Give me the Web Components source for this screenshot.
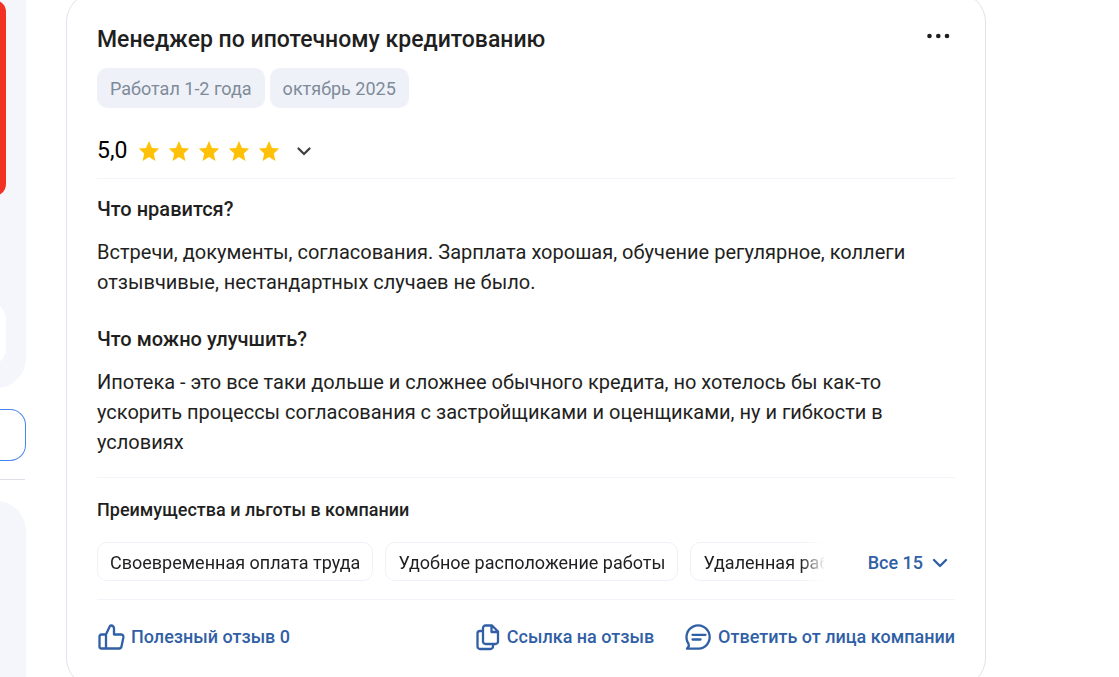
<!DOCTYPE html>
<html lang="ru">
<head>
<meta charset="utf-8">
<meta name="viewport" content="width=device-width, initial-scale=1">
<title>Отзыв о компании</title>
<style>
body { margin: 0; background: #fff; color: #1f1f22; font-family: Roboto, "Liberation Sans", sans-serif; height: 100vh; overflow: hidden; }
</style>
</head>
<body>
<review-page>
  <side-rail slot="side"></side-rail>
  <review-card>
    <span slot="title">Менеджер по ипотечному кредитованию</span>
    <tag-chip slot="meta">Работал 1-2 года</tag-chip>
    <tag-chip slot="meta">октябрь 2025</tag-chip>
    <star-rating slot="rating" value="5"></star-rating>
    <review-section>
      <span slot="heading">Что нравится?</span>
      Встречи, документы, согласования. Зарплата хорошая, обучение регулярное, коллеги отзывчивые, нестандартных случаев не было.
    </review-section>
    <review-section>
      <span slot="heading">Что можно улучшить?</span>
      Ипотека - это все таки дольше и сложнее обычного кредита, но хотелось бы как-то ускорить процессы согласования с застройщиками и оценщиками, ну и гибкости в условиях
    </review-section>
    <benefit-list slot="benefits">
      <tag-chip outlined>Своевременная оплата труда</tag-chip>
      <tag-chip outlined>Удобное расположение работы</tag-chip>
      <tag-chip outlined>Удаленная работа</tag-chip>
    </benefit-list>
    <action-button slot="actions" icon="like">Полезный отзыв 0</action-button>
    <action-button slot="actions" icon="copy">Ссылка на отзыв</action-button>
    <action-button slot="actions" icon="reply">Ответить от лица компании</action-button>
  </review-card>
</review-page>

<script>
function define(name, html, setup) {
  const template = document.createElement('template');
  template.innerHTML = html;
  customElements.define(name, class extends HTMLElement {
    constructor() {
      super();
      this.attachShadow({ mode: 'open' }).append(template.content.cloneNode(true));
    }
    connectedCallback() { if (setup) setup(this, this.shadowRoot); }
  });
}

define('review-page', `
  <style>
    :host { display: grid; grid-template-columns: 26px minmax(0, 1fr); column-gap: 40px; padding-right: 133px; }
  </style>
  <slot name="side"></slot>
  <main><slot></slot></main>`);

define('side-rail', `
  <style>
    :host { display: block; overflow: hidden; }
    aside { display: flex; flex-direction: column; margin-left: -60px; }
    .panel { background: #f4f6fc; border-radius: 0 0 30px 0; padding-right: 20px; padding-bottom: 23px; }
    .banner { height: 196px; background: #f23122; border-radius: 0 12px 12px 0; }
    .field { height: 62px; margin-top: 107px; background: #fff; border-radius: 0 16px 16px 0; }
    button { height: 52px; margin: 21px 0 18px; padding: 0; background: #fff; border: 1px solid #4a86f0; border-left: 0; border-radius: 0 16px 16px 0; }
    hr { width: auto; margin: 0 1px 0 0; border: 0; border-top: 1px solid #dde0ea; }
    .next { height: 240px; margin-top: 21px; padding: 0; border-radius: 0 30px 0 0; }
  </style>
  <aside>
    <div class="panel"><div class="banner"></div><div class="field"></div></div>
    <button type="button" aria-label="Подробнее"></button>
    <hr>
    <div class="panel next"></div>
  </aside>`);

define('review-card', `
  <style>
    :host { display: block; }
    article { margin-top: -8px; padding: 31px 30px 30px; border: 1px solid #dde4ec; border-radius: 30px; }
    header { display: flex; justify-content: space-between; align-items: center; height: 32px; }
    h2 { margin: 0; font-size: 23px; line-height: 32px; font-weight: 500; }
    .more { display: flex; margin: 0 0 8px; padding: 6px 5px; background: none; border: 0; }
    .meta { display: flex; gap: 5px; margin-top: 12px; }
    .rating { margin-top: 25px; padding-bottom: 9px; border-bottom: 1px solid #f2f4f9; }
    .text { display: flex; flex-direction: column; gap: 27px; padding: 15px 0 20px; border-bottom: 1px solid #f2f4f9; }
    h3 { margin: 20px 0; font-size: 18px; line-height: 24px; font-weight: 500; }
    .benefits { padding-bottom: 18px; border-bottom: 1px solid #f2f4f9; }
    footer { display: flex; gap: 30px; padding: 23px 0 6px; }
    ::slotted(action-button:first-of-type) { margin-right: auto; }
  </style>
  <article>
    <header>
      <h2><slot name="title"></slot></h2>
      <button class="more" type="button" aria-label="Ещё">
        <svg width="24" height="6" viewBox="0 0 24 6" fill="#1f1f22"><circle cx="3.5" cy="3" r="2.3"/><circle cx="12.3" cy="3" r="2.3"/><circle cx="21" cy="3" r="2.3"/></svg>
      </button>
    </header>
    <div class="meta"><slot name="meta"></slot></div>
    <div class="rating"><slot name="rating"></slot></div>
    <div class="text"><slot></slot></div>
    <div class="benefits"><h3>Преимущества и льготы в компании</h3><slot name="benefits"></slot></div>
    <footer><slot name="actions"></slot></footer>
  </article>`);

define('tag-chip', `
  <style>
    :host { display: block; box-sizing: border-box; flex: none; padding: 9px 13px 7px; border-radius: 10px; background: #eef1f8; color: #7f8b98; font-size: 18px; line-height: 24px; white-space: nowrap; }
    :host([outlined]) { padding: 8px 12px 6px; line-height: 23px; border: 1px solid #eff0f8; background: #fff; color: #1f1f22; }
  </style>
  <slot></slot>`);

define('star-rating', `
  <style>
    :host { display: flex; align-items: center; height: 36px; color: #000; font-size: 23px; line-height: 36px; font-weight: 400; }
    .stars { display: flex; gap: 10px; margin-left: 12px; }
    button { display: flex; margin-left: 10px; padding: 6px; background: none; border: 0; }
    svg { display: block; }
  </style>
  <span class="value"></span>
  <span class="stars" aria-hidden="true"></span>
  <button type="button" aria-label="Показать оценки">
    <svg width="18" height="18" viewBox="0 0 18 18" fill="none" stroke="#3f4145" stroke-width="2.3" stroke-linecap="round" stroke-linejoin="round"><path d="M3.500 6.500 9 12l5.500-5.500"/></svg>
  </button>`, (host, root) => {
  const value = Number(host.getAttribute('value'));
  root.querySelector('.value').textContent = value.toFixed(1).replace('.', ',');
  root.querySelector('.stars').innerHTML = '<svg width="20" height="20" viewBox="0 0 20 20" fill="#ffc107"><path d="M10 0 13 6.900 20.200 7.600 14.800 12.500 16.400 20 10 16.100 3.600 20 5.200 12.500-.2 7.600 7 6.900z"/></svg>'.repeat(value);
});

define('review-section', `
  <style>
    :host { display: block; }
    h3 { margin: 0 0 13px; font-size: 20px; line-height: 30px; font-weight: 500; }
    p { margin: 0; font-size: 20px; line-height: 30px; }
  </style>
  <h3><slot name="heading"></slot></h3>
  <p><slot></slot></p>`);

define('benefit-list', `
  <style>
    :host { display: flex; align-items: center; justify-content: space-between; }
    .row { display: flex; flex: 1; gap: 12px; min-width: 0; overflow: hidden; -webkit-mask-image: linear-gradient(to left, transparent 0, transparent 2px, #000 26px); mask-image: linear-gradient(to left, transparent 0, transparent 2px, #000 26px); }
    button { display: flex; align-items: center; gap: 8px; margin-left: 41px; padding: 2px 6px 0 0; background: none; border: 0; color: #315fa5; font: 500 18px/24px Roboto, "Liberation Sans", sans-serif; }
  </style>
  <div class="row"><slot></slot></div>
  <button type="button">Все 15
    <svg width="18" height="18" viewBox="0 0 18 18" fill="none" stroke="currentColor" stroke-width="2.400" stroke-linecap="round" stroke-linejoin="round"><path d="M3 6 9 12l6-6"/></svg>
  </button>`);

const icons = {
  like: '<path d="M8 11.500H4.500a2 2 0 0 0-2 2V23.500a2 2 0 0 0 2 2H22a2.500 2.500 0 0 0 2.500-2l1.900-9.300a2.300 2.300 0 0 0-2.300-2.700H17V5.500c0-1.900-1.200-3-2.900-3-.8 0-1.200.4-1.500 1.200L8.700 12zM9 12v13.500"/>',
  copy: '<path d="M12.500 2.500h6.500l6 6V18.500a2.500 2.500 0 0 1-2.500 2.500H12.500a2.500 2.500 0 0 1-2.500-2.500V5a2.500 2.500 0 0 1 2.500-2.500zM18.500 3.500v5.500H24M9.500 8H7a2.500 2.500 0 0 0-2.500 2.500V23.500a2.500 2.500 0 0 0 2.500 2.500H17.500a2.500 2.500 0 0 0 2.500-2.500V21.500"/>',
  reply: '<path d="M3 25.700l1.900-2.700-.5-2.500A11.600 11.600 0 1 1 14.500 25.700zM8.500 11.800h13M8.500 16.500h8"/>'
};

define('action-button', `
  <style>
    :host { display: block; }
    button { display: flex; align-items: center; gap: 6px; padding: 0; background: none; border: 0; color: #315fa5; font: 500 18px/24px Roboto, "Liberation Sans", sans-serif; white-space: nowrap; }
    svg { display: block; flex: none; }
  </style>
  <button type="button">
    <svg width="28" height="28" viewBox="0 0 28 28" fill="none" stroke="currentColor" stroke-width="2.300" stroke-linecap="round" stroke-linejoin="round"></svg>
    <slot></slot>
  </button>`, (host, root) => {
  root.querySelector('svg').innerHTML = icons[host.getAttribute('icon')];
});
</script>
</body>
</html>
